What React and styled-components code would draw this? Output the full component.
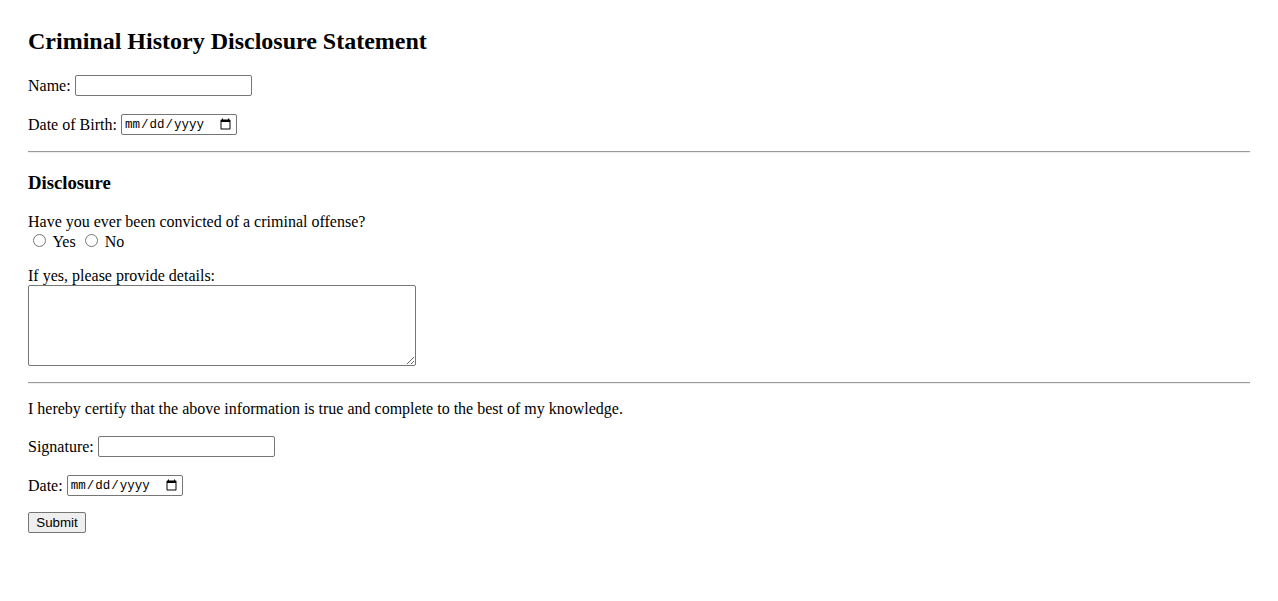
import React from "react";
import styled, { createGlobalStyle } from "styled-components";

const GlobalStyle = createGlobalStyle`
  html, body { margin: 0; padding: 0; background: #fff; }
  body {
    font-family: "Liberation Serif", "Times New Roman", serif;
    font-size: 16px;
    color: #000;
  }
`;

const Page = styled.form`
  display: flex;
  flex-direction: column;
  align-items: flex-start;
  padding: 27px 28px 40px;
`;

const Title = styled.h2`
  margin: 0;
  font-size: 24px;
  line-height: 28px;
  font-weight: 700;
`;

const SectionTitle = styled.h3`
  margin: ${(p) => p.$mt}px 0 0;
  font-size: 18.72px;
  line-height: 22px;
  font-weight: 700;
`;

const Field = styled.div`
  display: flex;
  align-items: center;
  gap: 4px;
  height: 21px;
  margin-top: ${(p) => p.$mt}px;
`;

const Label = styled.label`
  display: block;
  line-height: 18px;
  white-space: nowrap;
`;

const TextInput = styled.input`
  box-sizing: border-box;
  width: 177px;
  height: 21px;
  margin: 0;
  padding: 1px 2px;
  border: 1px solid #767676;
  border-radius: 2px;
  font: 13.33px "Liberation Sans", Arial, sans-serif;
  background: #fff;
`;

const DateInput = styled.input`
  box-sizing: border-box;
  width: 116px;
  height: 21px;
  margin: 0;
  padding: 1px 2px;
  border: 1px solid #767676;
  border-radius: 2px;
  font: 12.5px "Liberation Mono", monospace;
  color: #000;
  background: #fff;
`;

const Rule = styled.hr`
  align-self: stretch;
  margin: ${(p) => p.$mt}px 0 0;
  height: 0;
  border: 0;
  border-top: 1px solid #9a9a9a;
  border-bottom: 1px solid #eeeeee;
`;

const Block = styled.div`
  margin-top: ${(p) => p.$mt}px;
  line-height: 18px;
`;

const RadioLine = styled.div`
  line-height: 18px;
`;

const Radio = styled.input`
  margin: 3px 3px 0 5px;
  width: 13px;
  height: 13px;
`;

const Details = styled.textarea`
  display: block;
  box-sizing: border-box;
  width: 388px;
  height: 81px;
  margin: 0;
  padding: 2px;
  border: 1px solid #767676;
  border-radius: 2px;
  font: 13.33px "Liberation Mono", monospace;
  resize: both;
`;

const Statement = styled.p`
  margin: ${(p) => p.$mt}px 0 0;
  line-height: 18px;
`;

const SubmitButton = styled.button`
  box-sizing: border-box;
  width: 58px;
  height: 21px;
  margin-top: ${(p) => p.$mt}px;
  padding: 1px 6px;
  border: 1px solid #767676;
  border-radius: 2px;
  background: #efefef;
  color: #000;
  font: 13.33px "Liberation Sans", Arial, sans-serif;
`;

export default function App() {
  return (
    <>
      <GlobalStyle />
      <Page onSubmit={(e) => e.preventDefault()}>
        <Title>Criminal History Disclosure Statement</Title>
        <Field $mt={20}>
          <Label htmlFor="name">Name:</Label>
          <TextInput id="name" type="text" />
        </Field>
        <Field $mt={18}>
          <Label htmlFor="dob">Date of Birth:</Label>
          <DateInput id="dob" type="date" />
        </Field>
        <Rule $mt={16} />
        <SectionTitle $mt={19}>Disclosure</SectionTitle>
        <Block $mt={19}>
          Have you ever been convicted of a criminal offense?
          <RadioLine>
            <Radio type="radio" name="convicted" value="yes" /> Yes{" "}
            <Radio type="radio" name="convicted" value="no" /> No
          </RadioLine>
        </Block>
        <Block $mt={16}>
          <Label htmlFor="details">If yes, please provide details:</Label>
          <Details id="details" />
        </Block>
        <Rule $mt={16} />
        <Statement $mt={16}>
          I hereby certify that the above information is true and complete to the best of my knowledge.
        </Statement>
        <Field $mt={18}>
          <Label htmlFor="sig">Signature:</Label>
          <TextInput id="sig" type="text" />
        </Field>
        <Field $mt={18}>
          <Label htmlFor="date">Date:</Label>
          <DateInput id="date" type="date" />
        </Field>
        <SubmitButton type="submit" $mt={16}>
          Submit
        </SubmitButton>
      </Page>
    </>
  );
}
